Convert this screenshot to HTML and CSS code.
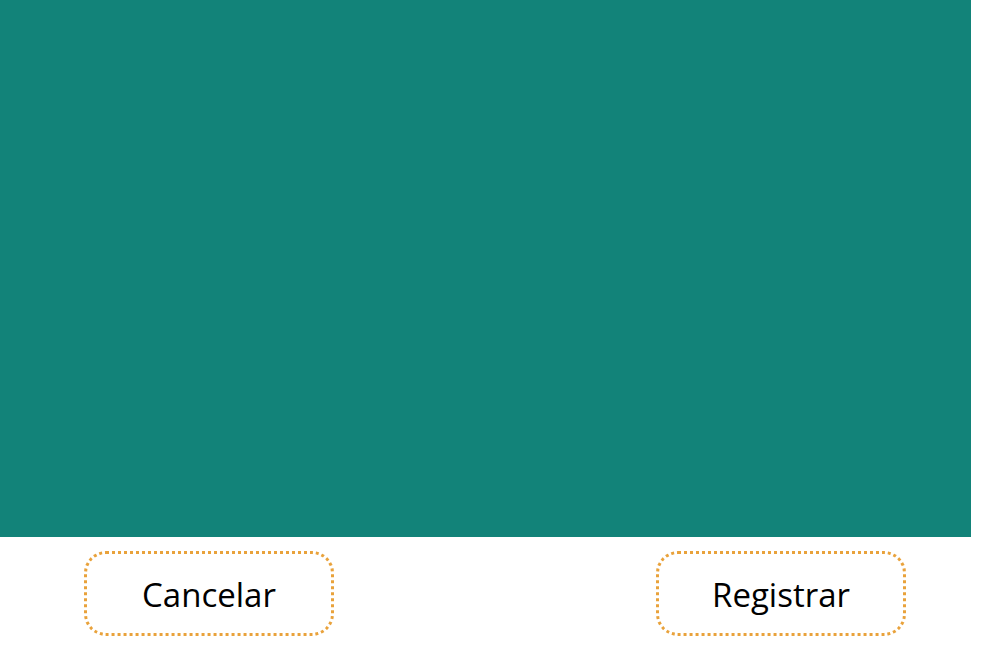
FILE: index.html
```html
<!DOCTYPE html>
<html lang="es">
<head>
<meta charset="utf-8">
<title>Registro</title>
<link rel="stylesheet" href="styles.css">
</head>
<body>
  <div class="page">
    <div class="panel"></div>
    <div class="actions">
      <button class="btn" type="button">Cancelar</button>
      <button class="btn" type="button">Registrar</button>
    </div>
  </div>
</body>
</html>
```

FILE: styles.css
```css
html, body {
  margin: 0;
  padding: 0;
  background: #ffffff;
}
body {
  font-family: "Open Sans", "Liberation Sans", sans-serif;
}
.page {
  width: 990px;
}
.panel {
  width: 971px;
  height: 537px;
  background: #128379;
}
.actions {
  display: flex;
  justify-content: space-between;
  padding: 14px 84px 0 84px;
}
.btn {
  width: 250px;
  height: 85px;
  box-sizing: border-box;
  border: 3px dotted #e9a23b;
  border-radius: 22px;
  background: #ffffff;
  color: #000000;
  font-family: "Open Sans", "Liberation Sans", sans-serif;
  font-size: 33px;
  padding: 2px 0 0 0;
  display: flex;
  align-items: center;
  justify-content: center;
}
```
